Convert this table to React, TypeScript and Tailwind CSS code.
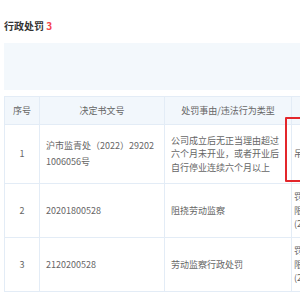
import React from "react"

type Row = {
  no: number
  docNo: string
  reason: string
  result: string[]
  h: string
}

const rows: Row[] = [
  {
    no: 1,
    docNo: "沪市监青处（2022）292021006056号",
    reason: "公司成立后无正当理由超过六个月未开业，或者开业后自行停业连续六个月以上",
    result: ["吊销营业执照"],
    h: "h-[59px]",
  },
  {
    no: 2,
    docNo: "20201800528",
    reason: "阻挠劳动监察",
    result: ["罚款人民币贰仟元整", "限期改正违法行为", "(2020年12月)"],
    h: "h-[54px]",
  },
  {
    no: 3,
    docNo: "2120200528",
    reason: "劳动监察行政处罚",
    result: ["罚款人民币壹仟元整", "限期改正违法行为", "(2021年03月)"],
    h: "h-[54px]",
  },
]

export default function App() {
  return (
    <div className="h-[300px] w-[300px] overflow-hidden bg-white font-['Noto_Sans_CJK_SC','Noto_Sans',sans-serif]">
      <div className="w-[425px] pl-1 pt-[19px]">
        <h2 className="text-[10px] font-bold leading-[14px] text-[#333]">
          行政处罚 <span className="text-[#f5454c]">3</span>
        </h2>

        <div className="mt-[10px] h-[47px] bg-[#f3f8fc]" />

        <div className="relative mt-[6px]">
          <table className="w-full table-fixed border-collapse text-[9px] text-[#666]">
            <colgroup>
              <col className="w-[35px]" />
              <col className="w-[125px]" />
              <col className="w-[127px]" />
              <col className="w-[134px]" />
            </colgroup>
            <thead>
              <tr className="h-[28px] bg-[#f2f7fc]">
                <th className="border border-[#e3ecf6] font-normal">序号</th>
                <th className="border border-[#e3ecf6] font-normal">决定书文号</th>
                <th className="border border-[#e3ecf6] font-normal">处罚事由/违法行为类型</th>
                <th className="border border-[#e3ecf6] font-normal">处罚结果</th>
              </tr>
            </thead>
            <tbody>
              {rows.map((r) => (
                <tr key={r.no} className={r.h}>
                  <td className="border border-[#e3ecf6] text-center">{r.no}</td>
                  <td className="border border-[#e3ecf6] px-[6px] leading-[16px] break-all">{r.docNo}</td>
                  <td className="border border-[#e3ecf6] px-[6px] leading-[13.5px]">{r.reason}</td>
                  <td className="border border-[#e3ecf6] pl-[2px] pr-[6px] leading-[13.5px]">
                    {r.result.map((line) => (
                      <div key={line} className="whitespace-nowrap">
                        {line}
                      </div>
                    ))}
                  </td>
                </tr>
              ))}
            </tbody>
          </table>

          {/* highlight around the first result cell */}
          <div className="pointer-events-none absolute left-[281px] top-[21px] h-[65px] w-[60px] rounded-[1px] border-2 border-[#e3262b]" />
        </div>
      </div>
    </div>
  )
}
